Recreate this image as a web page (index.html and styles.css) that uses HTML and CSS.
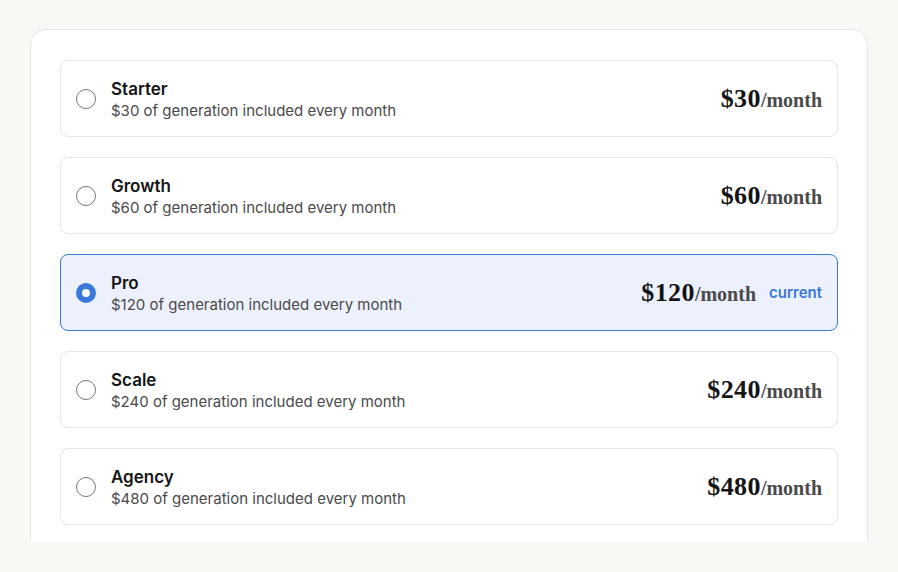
FILE: index.html
```html
<!DOCTYPE html>
<html lang="en">
  <head>
    <meta charset="UTF-8">
    <meta name="viewport" content="width=device-width, initial-scale=1.0">
    <title>Plans</title>
    <link rel="stylesheet" href="styles.css">
  </head>
  <body>
    <main class="panel">
      <ul class="plans">
        <li class="plan">
          <span class="radio"></span>
          <div class="info">
            <h3 class="name">Starter</h3>
            <p class="desc">$30 of generation included every month</p>
          </div>
          <p class="price"><strong>$30</strong>/month</p>
        </li>
        <li class="plan">
          <span class="radio"></span>
          <div class="info">
            <h3 class="name">Growth</h3>
            <p class="desc">$60 of generation included every month</p>
          </div>
          <p class="price"><strong>$60</strong>/month</p>
        </li>
        <li class="plan is-current">
          <span class="radio"></span>
          <div class="info">
            <h3 class="name">Pro</h3>
            <p class="desc">$120 of generation included every month</p>
          </div>
          <p class="price"><strong>$120</strong>/month</p>
          <span class="tag">current</span>
        </li>
        <li class="plan">
          <span class="radio"></span>
          <div class="info">
            <h3 class="name">Scale</h3>
            <p class="desc">$240 of generation included every month</p>
          </div>
          <p class="price"><strong>$240</strong>/month</p>
        </li>
        <li class="plan">
          <span class="radio"></span>
          <div class="info">
            <h3 class="name">Agency</h3>
            <p class="desc">$480 of generation included every month</p>
          </div>
          <p class="price"><strong>$480</strong>/month</p>
        </li>
      </ul>
    </main>
  </body>
</html>
```

FILE: styles.css
```css
*,
*::after,
*::before {
  box-sizing: border-box;
}

body {
  margin: 0;
  padding: 29px 30px 0;
  height: 572px;
  overflow: hidden;
  background: #f9f8f5;
  font-family: Inter, "Noto Sans", sans-serif;
  color: #151515;
}

.panel {
  height: 513px;
  padding: 30px 29px 0;
  background: #fff;
  border: 1px solid #e6e6e6;
  border-bottom: none;
  border-radius: 16px 16px 0 0;
}

.plans {
  list-style: none;
  margin: 0;
  padding: 0;
  display: flex;
  flex-direction: column;
  gap: 20px;
}

.plan {
  display: flex;
  align-items: center;
  gap: 15px;
  height: 77px;
  padding: 0 15px;
  border: 1px solid #e5e5e8;
  border-radius: 8px;
}

.plan.is-current {
  background: #edf1fd;
  border-color: #3a78db;
}

.radio {
  flex: none;
  width: 20px;
  height: 20px;
  border: 1.5px solid #74767e;
  border-radius: 50%;
}

.is-current .radio {
  border: 6px solid #3a78db;
  background: #fff;
}

.info {
  flex: 1;
  padding-top: 3px;
}

.name {
  margin: 0 0 1px;
  font-size: 17px;
  font-weight: 600;
  line-height: 21px;
}

.desc {
  margin: 0;
  font-size: 15px;
  line-height: 20px;
  color: #4a4a4a;
}

.price {
  margin: 0;
  font-family: "Liberation Serif", "DejaVu Serif", serif;
  font-size: 20px;
  font-weight: 700;
  color: #4a4a4a;
}

.price strong {
  font-size: 26px;
  color: #141414;
  letter-spacing: 0.4px;
}

.tag {
  margin-left: -2px;
  font-size: 15px;
  font-weight: 600;
  color: #3a78db;
}
```
